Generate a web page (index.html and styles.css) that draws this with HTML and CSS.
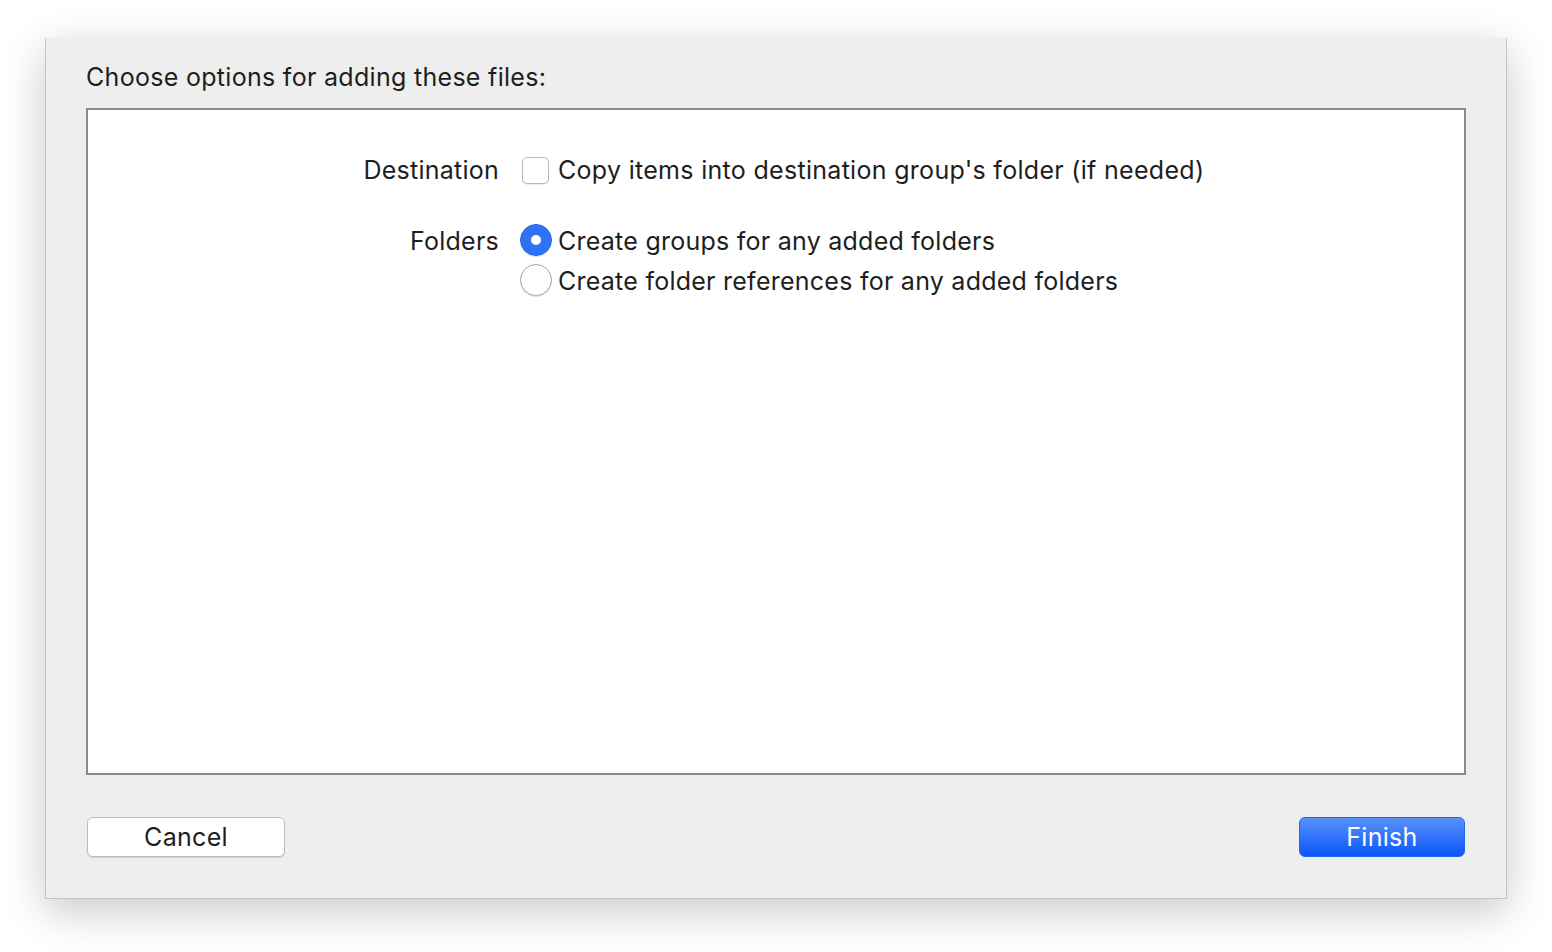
FILE: index.html
```html
<!DOCTYPE html>
<html>
<head>
<meta charset="utf-8">
<link rel="stylesheet" href="styles.css">
</head>
<body>
<div class="dialog">
  <div class="title">Choose options for adding these files:</div>
  <div class="panel">
    <div class="form">
      <div class="label dest">Destination</div>
      <div class="control dest">
        <span class="checkbox"></span>
        <span class="text">Copy items into destination group's folder (if needed)</span>
      </div>
      <div class="label folders">Folders</div>
      <div class="control-group">
        <div class="control">
          <span class="radio on"></span>
          <span class="text">Create groups for any added folders</span>
        </div>
        <div class="control">
          <span class="radio"></span>
          <span class="text">Create folder references for any added folders</span>
        </div>
      </div>
    </div>
  </div>
  <div class="buttons">
    <button class="btn cancel">Cancel</button>
    <button class="btn finish">Finish</button>
  </div>
</div>
</body>
</html>
```

FILE: styles.css
```css
html, body {
  margin: 0;
  padding: 0;
  background: #ffffff;
}
body {
  font-family: Inter, "Noto Sans", sans-serif;
  color: #1e1e1e;
  width: 1552px;
  height: 952px;
  overflow: hidden;
}
.dialog {
  margin-left: 45px;
  margin-top: 38px;
  width: 1380px;
  height: 860px;
  background: #eeeeee;
  border: 1px solid #c4c4c4;
  border-top: none;
  box-shadow: 0 12px 40px rgba(0, 0, 0, 0.22);
  padding: 0 40px;
  box-sizing: content-box;
  display: flex;
  flex-direction: column;
}
.title {
  font-size: 25px;
  line-height: 30px;
  margin-top: 24px;
  height: 46px;
  letter-spacing: 0.3px;
}
.panel {
  height: 663px;
  background: #ffffff;
  border: 2px solid #8a8a8a;
}
.form {
  display: grid;
  grid-template-columns: 411px auto;
  column-gap: 21px;
  row-gap: 38px;
  padding-top: 44px;
  align-items: start;
}
.label {
  text-align: right;
  font-size: 25px;
  line-height: 32px;
  letter-spacing: 0.25px;
}
.label.folders {
  padding-top: 1px;
}
.control {
  display: flex;
  align-items: center;
  height: 32px;
  font-size: 25px;
  letter-spacing: 0.3px;
}
.control-group {
  display: flex;
  flex-direction: column;
  gap: 8px;
}
.control-group .text {
  padding-top: 2px;
  letter-spacing: 0.25px;
}
.text {
  margin-left: 6px;
}
.checkbox {
  width: 25px;
  height: 25px;
  margin-left: 2px;
  border: 1px solid #b9b9b9;
  border-radius: 5px;
  background: #ffffff;
  box-shadow: 0 1px 1px rgba(0,0,0,0.08);
  margin-right: 3px;
}
.radio {
  width: 30px;
  height: 30px;
  border-radius: 50%;
  border: 1px solid #a9a9a9;
  background: #ffffff;
  box-shadow: 0 1px 1px rgba(0,0,0,0.12);
  position: relative;
  flex: none;
}
.radio.on {
  background: #2f72f5;
  border-color: #2a6af0;
}
.radio.on::after {
  content: "";
  position: absolute;
  left: 10px;
  top: 10px;
  width: 10px;
  height: 10px;
  border-radius: 50%;
  background: #ffffff;
}
.buttons {
  display: flex;
  justify-content: space-between;
  margin-top: 42px;
}
.btn {
  font-family: Inter, "Noto Sans", sans-serif;
  font-size: 25px;
  letter-spacing: 0.3px;
  height: 40px;
  border-radius: 6px;
  padding: 0;
  margin-left: 1px;
}
.cancel {
  width: 198px;
  background: #ffffff;
  color: #1e1e1e;
  border: 1px solid #bdbdbd;
  box-shadow: 0 1px 1px rgba(0,0,0,0.12);
}
.finish {
  width: 166px;
  color: #ffffff;
  border: 1px solid #2166f0;
  background: linear-gradient(#5a92fa, #0a55fb);
  margin-right: 1px;
}
```
